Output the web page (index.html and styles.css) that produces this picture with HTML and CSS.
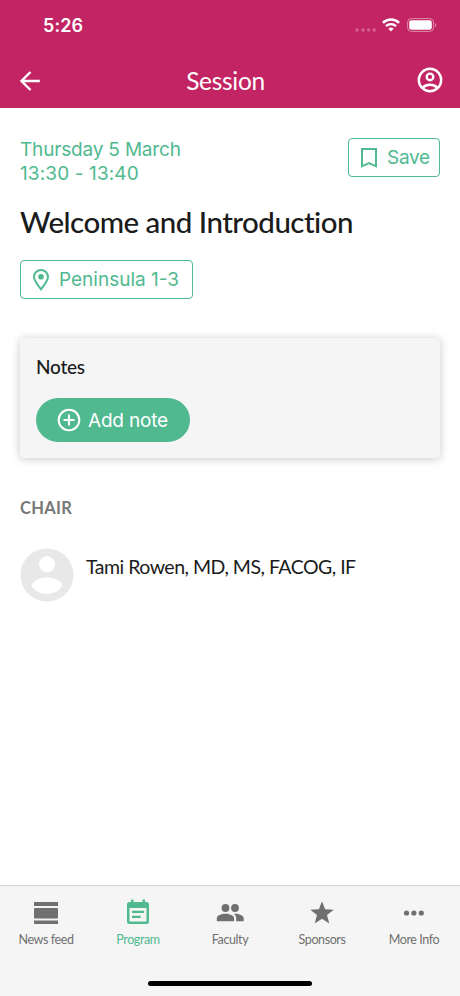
FILE: index.html
```html
<!DOCTYPE html>
<html lang="en">
<head>
<meta charset="utf-8">
<title>Session</title>
<link rel="stylesheet" href="styles.css">
</head>
<body>
<div class="app">
  <header class="header">
    <div class="status">
      <span class="time">5:26</span>
      <div class="indicators">
        <svg class="signal" width="22" height="4" viewBox="0 0 22 4"><circle cx="2" cy="2" r="1.8"/><circle cx="8" cy="2" r="1.8"/><circle cx="13.6" cy="2" r="1.8"/><circle cx="19.2" cy="2" r="1.8"/></svg>
        <svg class="wifi" width="18" height="14" viewBox="0 0 18 14"><path d="M.9 4.9a11.6 11.6 0 0 1 16.2 0" stroke-width="2.5"/><path d="M4 8.1a7.2 7.2 0 0 1 10 0" stroke-width="2.3"/><path class="solid" d="M9 13.5l-2.6-2.7a3.7 3.7 0 0 1 5.2 0z"/></svg>
        <svg class="battery" width="30" height="14" viewBox="0 0 30 14"><rect class="case" x=".6" y=".6" width="26" height="12.8" rx="3.8"/><rect class="level" x="2.2" y="2.2" width="22.6" height="9.6" rx="2.4"/><path class="cap" d="M28 5v4.200c1.700-.8 1.700-3.400 0-4.200z"/></svg>
      </div>
    </div>
    <nav class="navbar">
      <svg class="back" width="20" height="20" viewBox="0 0 20 20"><path d="M19.800 10H2M10.500 1L1.500 10l9 9"/></svg>
      <h1 class="screen-title">Session</h1>
      <svg class="account" width="26" height="26" viewBox="0 0 26 26"><circle cx="13" cy="13" r="11.200"/><circle cx="13" cy="9.900" r="3.300"/><path d="M5.500 20.800c4.200-4 10.800-4 15 0"/></svg>
    </nav>
  </header>
  <main class="content">
    <div class="top-row">
      <p class="when"><span class="date">Thursday 5 March</span><span class="hours">13:30 - 13:40</span></p>
      <button class="outline save"><svg width="18" height="20" viewBox="0 0 18 20"><path d="M2 1h14v17.300l-7-3.200-7 3.200z"/></svg><span>Save</span></button>
    </div>
    <h2 class="title">Welcome and Introduction</h2>
    <button class="outline place"><svg width="16" height="22" viewBox="0 0 16 22"><path d="M8 20.300C5.200 16.800 1 11.600 1 8a7 7 0 0 1 14 0c0 3.600-4.200 8.800-7 12.300z"/><circle class="dot" cx="8" cy="7.800" r="2.800"/></svg><span>Peninsula 1-3</span></button>
    <section class="notes">
      <h3 class="notes-title">Notes</h3>
      <button class="add"><svg width="24" height="24" viewBox="0 0 24 24"><circle cx="12" cy="12" r="10.300"/><path d="M12 6.500v11M6.500 12h11"/></svg><span>Add note</span></button>
    </section>
    <h3 class="role">CHAIR</h3>
    <div class="person">
      <svg class="avatar" width="54" height="54" viewBox="0 0 54 54"><circle class="disc" cx="27" cy="27" r="26.500"/><circle class="figure" cx="27" cy="16.300" r="8"/><path class="figure" d="M11.500 37.500C15 26.700 39 26.700 42.500 37.500 36 48.800 18 48.800 11.500 37.500z"/></svg>
      <span class="name">Tami Rowen, MD, MS, FACOG, IF</span>
    </div>
  </main>
  <footer class="tabs">
    <div class="tab"><svg width="28" height="28" viewBox="0 0 28 28"><path d="M2 3h24v4H2zM2 21.500h24v3.500H2z"/><rect x="2" y="9" width="24" height="10.500" rx="1"/></svg><span>News feed</span></div>
    <div class="tab active"><svg width="28" height="28" viewBox="0 0 28 28"><path fill-rule="evenodd" d="M7 .5h2.500V3h9V.5H21V3h1.500Q25 3 25 5.500v17q0 2.500-2.500 2.500h-17Q3 25 3 22.500v-17Q3 3 5.500 3H7zM5.500 9v13.500h17V9z"/><path d="M8 11.700h12.200V14H8zM8 16.700h8.700V19H8z"/></svg><span>Program</span></div>
    <div class="tab"><svg width="28" height="28" viewBox="0 0 28 28"><circle cx="9.500" cy="9" r="3.900"/><circle cx="19" cy="9" r="3.900"/><path d="M.8 22.300v-3c0-3 4.700-4.500 8.700-4.500s8.600 1.500 8.600 4.500v3zM20.200 22.300v-3c0-2-.9-3.300-2.200-4.400 4.200-.3 9.700 1.400 9.700 4.400v3z"/></svg><span>Faculty</span></div>
    <div class="tab"><svg width="28" height="28" viewBox="0 0 28 28"><path d="M14 2.300l3.100 8 8.700.4-6.800 5.400 2.300 8.500L14 19.800l-7.300 4.800L9 16.100l-6.800-5.400 8.700-.4z"/></svg><span>Sponsors</span></div>
    <div class="tab"><svg width="28" height="28" viewBox="0 0 28 28"><circle cx="6.500" cy="14" r="2.600"/><circle cx="13.900" cy="14" r="2.600"/><circle cx="21.300" cy="14" r="2.600"/></svg><span>More Info</span></div>
    <div class="home-bar"></div>
  </footer>
</div>
</body>
</html>
```
FILE: styles.css
```css
* { box-sizing: border-box; margin: 0; padding: 0; }
body { font-family: Lato, "Open Sans", sans-serif; font-variant-ligatures: none; background: #fff; color: #1b1b1b; }
svg { display: block; flex: none; }
button { font: 400 19px/24px Inter, sans-serif; white-space: nowrap; }
button span { padding-top: 1px; }
.app { height: 996px; display: flex; flex-direction: column; overflow: hidden; }

.header { height: 108px; background: #c32463; color: #fff; }
.status { height: 50px; display: flex; justify-content: space-between; padding: 0 23px 0 43px; }
.time { font: 600 18px/51px Inter, sans-serif; letter-spacing: .1px; }
.indicators { display: flex; align-items: center; }
.signal { fill: #e183a7; margin: 9px 5px 0 0; opacity: .65; }
.wifi { fill: none; stroke: #fff; margin-right: 7px; }
.wifi .solid { fill: #fff; stroke: none; }
.case { fill: none; stroke: #e08dab; stroke-width: 1; }
.level { fill: #fff; }
.cap { fill: #e08dab; }
.navbar { height: 58px; display: flex; align-items: center; justify-content: space-between; padding: 4px 17px 0 20px; }
.back { fill: none; stroke: #fff; stroke-width: 2.4; }
.screen-title { font-size: 24.500px; font-weight: 400; line-height: 30px; letter-spacing: -.3px; margin-right: 6px; }
.account { fill: none; stroke: #fff; stroke-width: 2.400; margin-top: -3px; }

.content { flex: 1; padding: 30px 20px 0; }
.top-row { display: flex; justify-content: space-between; align-items: flex-start; height: 48px; }
.when { font: 400 19px/24px Inter, sans-serif; color: #50b990; display: flex; flex-direction: column; }
.date, .hours { white-space: nowrap; }
.date { letter-spacing: -.18px; }
.hours { letter-spacing: .12px; }
.outline { display: flex; align-items: center; height: 39px; background: #fff; border: 1.500px solid #50b990; border-radius: 4px; color: #50b990; }
.outline svg { fill: none; stroke: #50b990; stroke-width: 2; }
.outline .dot { fill: #50b990; stroke: none; }
.save { width: 92px; padding-left: 11px; gap: 9px; letter-spacing: -.3px; }
.title { font-size: 29.500px; font-weight: 500; line-height: 36px; letter-spacing: -.52px; margin-top: 18px; white-space: nowrap; }
.place { width: 173px; margin-top: 20px; padding-left: 12px; gap: 10px; }
.notes { height: 120px; margin-top: 39px; padding: 17px 16px; background: #f5f5f5; border-radius: 4px; box-shadow: 0 1px 10px rgba(0, 0, 0, .22); }
.notes-title { font-size: 19px; font-weight: 500; line-height: 24px; letter-spacing: -.25px; }
.add { display: flex; align-items: center; gap: 7px; width: 154px; height: 44px; margin-top: 19px; padding-left: 21px; border: 0; border-radius: 22px; background: #50b990; color: #fff; letter-spacing: -.2px; }
.add svg { fill: none; stroke: #fff; stroke-width: 2.100; }
.role { font-size: 16.500px; font-weight: 700; line-height: 22px; letter-spacing: .3px; margin-top: 39px; color: #777; }
.person { display: flex; gap: 12px; margin-top: 29px; }
.name { font-size: 19.500px; line-height: 24px; letter-spacing: -.5px; margin-top: 7px; white-space: nowrap; }
.disc { fill: #e8e8e8; }
.figure { fill: #fff; }

.tabs { height: 111px; display: grid; grid-template-columns: repeat(5, 92px); grid-template-rows: 1fr 17px; background: #f5f5f5; border-top: 1px solid #d6d6d6; }
.tab { display: flex; flex-direction: column; align-items: center; padding-top: 13px; font-size: 12.500px; line-height: 16px; letter-spacing: -.4px; color: #707070; gap: 5px; white-space: nowrap; }
.tab svg { fill: currentColor; }
.active { color: #50b990; }
.home-bar { grid-column: 1 / -1; justify-self: center; width: 164px; height: 5px; margin-top: 2px; border-radius: 3px; background: #000; }
```
